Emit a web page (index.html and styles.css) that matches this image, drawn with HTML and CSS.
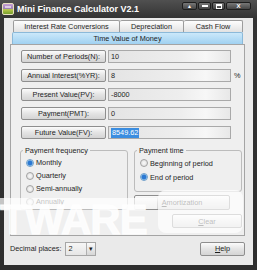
FILE: index.html
```html
<!DOCTYPE html>
<html lang="en">
<head>
  <meta charset="UTF-8" />
  <title>Mini Finance Calculator V2.1</title>
  <link rel="stylesheet" href="styles.css">
</head>
<body>
  <div class="window">
    <div class="titlebar">
      <svg class="app-icon" viewBox="0 0 12 12">
        <defs>
          <linearGradient id="ig" x1="0" y1="0" x2="0" y2="1">
            <stop offset="0" stop-color="#c9a0d8" />
            <stop offset="0.5" stop-color="#9a7fb0" />
            <stop offset="0.55" stop-color="#b8c84a" />
            <stop offset="1" stop-color="#6f9a2a" />
          </linearGradient>
        </defs>
        <rect x="0.5" y="0.5" width="11" height="11" rx="1.5" fill="url(#ig)" stroke="#e8e0c0" />
        <rect x="3" y="3" width="6" height="2" fill="#f2e6f6" opacity="0.7" />
      </svg>
      <span class="title">Mini Finance Calculator V2.1</span>
      <div class="controls">
        <span class="ctl ctl-up">&#9650;</span>
        <span class="ctl ctl-min"><i class="bar"></i></span>
        <span class="ctl ctl-max"><i class="box"></i></span>
        <span class="ctl ctl-close">X</span>
      </div>
    </div>

    <div class="client">
      <div class="tab-row top">
        <div class="tab tab-irc">Interest Rate Conversions</div>
        <div class="tab tab-dep">Depreciation</div>
        <div class="tab tab-cf">Cash Flow</div>
      </div>
      <div class="tab-row front">
        <div class="tab active">Time Value of Money</div>
      </div>

      <div class="panel">
        <div class="fields">
          <div class="field">
            <button class="btn field-btn">Number of Periods(N):</button>
            <div class="input">10</div>
          </div>
          <div class="field">
            <button class="btn field-btn">Annual Interest(%YR):</button>
            <div class="input">8</div>
            <span class="unit">%</span>
          </div>
          <div class="field">
            <button class="btn field-btn">Present Value(PV):</button>
            <div class="input">-8000</div>
          </div>
          <div class="field">
            <button class="btn field-btn">Payment(PMT):</button>
            <div class="input">0</div>
          </div>
          <div class="field">
            <button class="btn field-btn">Future Value(FV):</button>
            <div class="input"><span class="selected">8549.62</span></div>
          </div>
        </div>

        <div class="lower">
          <fieldset class="group freq">
            <legend>Payment frequency</legend>
            <div class="radio on"><span class="dot"></span>Monthly</div>
            <div class="radio"><span class="dot"></span>Quarterly</div>
            <div class="radio"><span class="dot"></span>Semi-annually</div>
            <div class="radio"><span class="dot"></span>Annually</div>
          </fieldset>
          <div class="right-col">
            <fieldset class="group time">
              <legend>Payment time</legend>
              <div class="radio"><span class="dot"></span>Beginning of period</div>
              <div class="radio on"><span class="dot"></span>End of period</div>
            </fieldset>
            <button class="btn amort"><u>A</u>mortization</button>
            <button class="btn clear"><u>C</u>lear</button>
          </div>
        </div>
      </div>

      <div class="footer">
        <span>Decimal places:</span>
        <div class="select">
          <span class="select-value">2</span>
          <span class="select-arrow">&#9662;</span>
        </div>
        <button class="btn help"><u>H</u>elp</button>
      </div>
    </div>

    <div class="wm-band"></div>
    <div class="wm-text">TWARE</div>
    <div class="wm-box"></div>
  </div>
</body>
</html>
```

FILE: styles.css
```css
* {
  box-sizing: border-box;
}

body {
  margin: 0;
  background: #2d2d2d;
  font-family: "Liberation Sans", Arial, sans-serif;
  font-size: 7.3px;
  color: #1e1e1e;
}

.window {
  position: relative;
  width: 257px;
  height: 270px;
  overflow: hidden;
  background: linear-gradient(#505050, #333 18px, #2e2e2e);
}

/* title bar */
.titlebar {
  height: 18px;
  display: flex;
  align-items: center;
  padding-left: 2px;
}
.app-icon {
  width: 12px;
  height: 12px;
  margin-right: 3px;
}
.title {
  color: #fff;
  font-weight: bold;
  font-size: 9px;
}
.controls {
  margin-left: auto;
  margin-right: 6px;
  align-self: flex-start;
  margin-top: 2px;
  display: flex;
  gap: 1px;
}
.ctl {
  height: 8px;
  width: 13px;
  border: 1px solid #1e1e1e;
  border-radius: 2px;
  background: linear-gradient(#777, #444);
  color: #fff;
  font-size: 5px;
  font-weight: bold;
  display: flex;
  align-items: center;
  justify-content: center;
}
.ctl-up {
  width: 15px;
}
.ctl-close {
  width: 25px;
  font-size: 6px;
}
.ctl .bar {
  width: 6px;
  height: 2px;
  background: #fff;
}
.ctl .box {
  width: 6px;
  height: 5px;
  border: 1px solid #fff;
  border-top-width: 2px;
}

/* client area */
.client {
  margin: 0 4px;
  height: 247px;
  background: #eaeaea;
}

.tab-row {
  display: flex;
}
.tab-row.top {
  padding: 2px 0 0 9px;
}
.tab-row.front {
  padding-left: 8px;
}
.tab {
  height: 12px;
  border: 1px solid #9c9c9c;
  border-bottom: none;
  border-radius: 2px 2px 0 0;
  background: linear-gradient(#fdfdfd, #e2e2e2);
  display: flex;
  align-items: center;
  justify-content: center;
}
.tab + .tab {
  border-left: none;
}
.tab-irc {
  width: 107px;
}
.tab-dep {
  width: 64px;
}
.tab-cf {
  width: 59px;
}
.tab.active {
  width: 231px;
  border-color: #8bb9d9;
  background: linear-gradient(#cbe8fa, #a0d1f1);
}

.panel {
  margin-left: 6px;
  width: 235px;
  height: 192px;
  border: 1px solid #a4a4a4;
  background: #efefef;
}

.fields {
  display: flex;
  flex-direction: column;
  gap: 6px;
  padding: 5px 0 0 10px;
}
.field {
  display: flex;
  align-items: center;
  gap: 2px;
  height: 13px;
}

.btn {
  font: inherit;
  color: inherit;
  padding: 0;
  border: 1px solid #8e8e8e;
  border-radius: 2px;
  background: linear-gradient(#fbfbfb, #e4e4e4 50%, #d4d4d4);
  display: flex;
  align-items: center;
  justify-content: center;
}
.field-btn {
  width: 85px;
  height: 13px;
}
.input {
  width: 123px;
  height: 13px;
  border: 1px solid #a9a9a9;
  background: linear-gradient(to right, #e4e4e4, #eeeeee 60%, #f7f7f7 80%, #e8e8e8);
  padding-left: 2px;
  display: flex;
  align-items: center;
}
.unit {
  margin-left: 1px;
}
.selected {
  background: #3b8de0;
  color: #fff;
  padding: 0 1px;
  line-height: 10px;
}

.lower {
  display: flex;
  align-items: flex-start;
  gap: 6px;
  margin: 7px 0 0 9px;
}
.group {
  margin: 0;
  min-width: 0;
  width: 108px;
  border: 1px solid #bcbcbc;
  border-radius: 3px;
  padding: 1px 2px 1px 2px;
}
.group legend {
  padding: 0 2px;
  line-height: 9px;
}
.group.time {
  padding-bottom: 7px;
}
.group.time .radio {
  height: 14px;
}
.radio {
  display: flex;
  align-items: center;
  gap: 2px;
  height: 13px;
  padding-left: 3px;
}
.dot {
  width: 8px;
  height: 8px;
  border-radius: 50%;
  border: 1px solid #a2a2a2;
  background: radial-gradient(circle, #fafafa, #d8d8d8);
}
.radio.on .dot {
  border-color: #6f9fca;
  background: radial-gradient(circle, #2b78d2 0 2px, #a9d2f2 3px, #e9f4fc);
}

.right-col {
  display: flex;
  flex-direction: column;
}
.amort {
  margin-top: 3px;
  width: 96px;
  height: 15px;
}
.clear {
  margin: 4px 0 0 38px;
  width: 70px;
  height: 14px;
}

.footer {
  display: flex;
  align-items: center;
  height: 15px;
  margin-top: 5px;
  padding: 0 8px 0 6px;
}
.select {
  margin-left: 3px;
  width: 31px;
  height: 14px;
  border: 1px solid #a6a6a6;
  background: linear-gradient(#f6f6f6, #e6e6e6);
  display: flex;
  align-items: center;
}
.select-value {
  flex: 1;
  padding-left: 3px;
}
.select-arrow {
  width: 9px;
  height: 12px;
  border-left: 1px solid #b0b0b0;
  background: linear-gradient(#fafafa, #d6d6d6);
  font-size: 7px;
  display: flex;
  align-items: center;
  justify-content: center;
}
.help {
  margin-left: auto;
  width: 45px;
  height: 14px;
}

/* watermark over the screenshot */
.wm-band {
  position: absolute;
  left: 0;
  top: 198px;
  width: 157px;
  height: 11px;
  background: rgba(255, 255, 255, 0.72);
}
.wm-text {
  position: absolute;
  left: 0;
  top: 200px;
  font-size: 42px;
  line-height: 40px;
  font-weight: bold;
  letter-spacing: -1px;
  color: rgba(255, 255, 255, 0.85);
  -webkit-text-stroke: 1px rgba(255, 255, 255, 0.85);
}
.wm-box {
  position: absolute;
  left: 158px;
  top: 190px;
  width: 85px;
  height: 43px;
  border-radius: 8px;
  background: rgba(255, 255, 255, 0.7);
}
```
